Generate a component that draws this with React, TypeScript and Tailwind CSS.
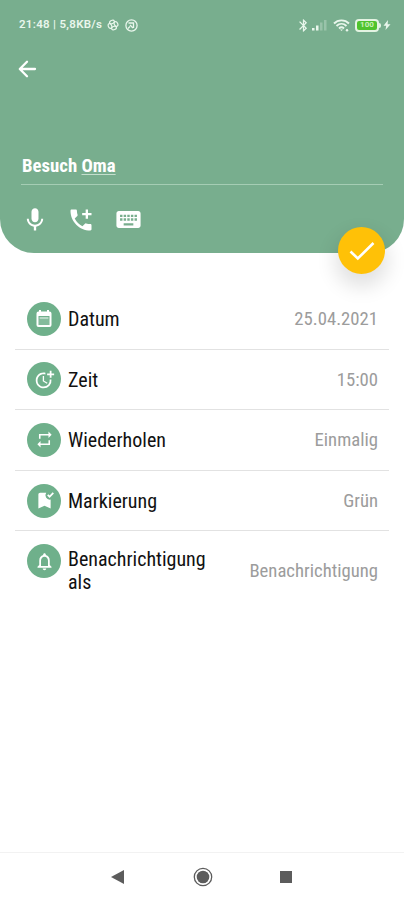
import type { ReactNode } from "react";
import {
  MdAddIcCall,
  MdBluetooth,
  MdBookmarkAdded,
  MdKeyboard,
  MdMic,
  MdMoreTime,
  MdNotificationsNone,
  MdRepeat,
} from "react-icons/md";

function CalendarIcon() {
  return (
    <svg width="16" height="18" viewBox="0 0 16 18" fill="#fff">
      <path fillRule="evenodd" d="M3 0h2v1.500h6V0h2v1.500h.5A2 2 0 0 1 15.500 3.500v11.500a2 2 0 0 1-2 2h-11a2 2 0 0 1-2-2V3.500a2 2 0 0 1 2-2H3zM2.500 6v9h11V6z" />
      <path d="M3.500 7h9v2.200h-9z" opacity=".5" />
      <path d="M2.500 9.500h11v5.500h-11z" opacity=".15" />
    </svg>
  );
}

const rows: { label: string; value: string; icon: ReactNode }[] = [
  { label: "Datum", value: "25.04.2021", icon: <CalendarIcon /> },
  { label: "Zeit", value: "15:00", icon: <MdMoreTime size={21} /> },
  { label: "Wiederholen", value: "Einmalig", icon: <MdRepeat size={19} /> },
  { label: "Markierung", value: "Grün", icon: <MdBookmarkAdded size={21} /> },
];

const iconClass = "flex size-[34px] shrink-0 items-center justify-center rounded-full bg-[#6fb08b] text-white";
const labelClass = "ml-[7px] text-[20px] leading-[23px] text-[#111] [font-stretch:75%]";
const valueClass = "ml-auto text-[18.7px] leading-[24px] text-[#9c9c9c] [font-stretch:75%]";

function StatusBar() {
  return (
    <div className="flex h-[50px] items-center pl-[19px] pr-[13px] text-[#e9f6ec]">
      <span className="w-[85px] whitespace-nowrap text-[11.5px] font-semibold tracking-[0.3px]">21:48 | 5,8KB/s</span>
      {/* fan */}
      <svg className="ml-[3px]" width="12" height="12" viewBox="0 0 12 12" fill="none" stroke="currentColor" strokeWidth="1.200">
        <ellipse cx="5" cy="3" rx="2.500" ry="1.700" transform="rotate(-25 5 3)" />
        <ellipse cx="9" cy="5" rx="1.700" ry="2.500" transform="rotate(-25 9 5)" />
        <ellipse cx="7" cy="9" rx="2.500" ry="1.700" transform="rotate(-25 7 9)" />
        <ellipse cx="3" cy="7" rx="1.700" ry="2.500" transform="rotate(-25 3 7)" />
      </svg>
      <svg className="ml-[6px]" width="13" height="13" viewBox="0 0 13 13" fill="none" stroke="currentColor" strokeWidth="1.300">
        <circle cx="6.500" cy="6.500" r="5.600" />
        <path d="M3.500 4h5v5M3 9.500l2-2M5 6l3 3" />
      </svg>
      <MdBluetooth className="ml-auto" size={15} />
      <svg className="ml-[1px]" width="15" height="12" viewBox="0 0 15 12" fill="currentColor">
        <path d="M0 9h2.500v2.500H0zM4 6.500h2.500v5H4z" />
        <path d="M8 3.500h2.500v8H8zM12 1h2.500v10.500H12z" opacity=".3" />
      </svg>
      <svg className="ml-[6px]" width="17" height="13" viewBox="0 0 17 13" fill="none" stroke="currentColor" strokeWidth="1.900">
        <path d="M1 4.500C5 .300 12 .300 16 4.500M3.500 7c3-2.900 7-2.900 10 0M6 9.500c1.500-1.400 3.500-1.400 5 0" />
        <path d="M7 10.500h3L8.500 12z" fill="currentColor" stroke="none" />
        <circle cx="14" cy="11.200" r="1.200" fill="currentColor" stroke="none" />
      </svg>
      <div className="ml-[5px] flex h-[13px] w-[24px] items-center justify-center rounded-[4px] border-2 border-[#e3f3e2] bg-[#4fc32d] text-[8px] font-bold leading-none text-[#c9f0b8]">
        100
      </div>
      <div className="h-[5px] w-[2px] rounded-r bg-[#e3f3e2]" />
      <svg className="ml-[2px]" width="8" height="10" viewBox="0 0 8 10" fill="currentColor">
        <path d="M5 0L.5 5.800h2.700L2.500 10L7.500 4.200H4.600z" />
      </svg>
    </div>
  );
}

export default function App() {
  return (
    <main className="flex h-[900px] w-[404px] flex-col overflow-hidden bg-white font-[Roboto,sans-serif]">
      <header className="relative h-[253px] rounded-b-[34px] bg-[#78ae8e] text-white">
        <StatusBar />
        <svg className="ml-[18px] mt-[10px]" width="19" height="18" viewBox="0 0 19 18" fill="none" stroke="currentColor" strokeWidth="2.300" strokeLinecap="round" strokeLinejoin="round">
          <path d="M17 9H2M9 1.800L1.800 9L9 16.200" />
        </svg>
        <div className="mx-[21px] mt-[76px] h-[31px] border-b border-[#a5cdb4] pl-px">
          <span className="inline-block text-[18.8px] font-bold leading-[25px] [font-stretch:75%]">
            Besuch <span className="underline decoration-[#c5dfce] decoration-1 underline-offset-2">Oma</span>
          </span>
        </div>
        <div className="flex items-center pl-[21px] pt-[20px]">
          <MdMic size={28} />
          <MdAddIcCall className="ml-[18px]" size={28} />
          <MdKeyboard className="ml-[19px]" size={29} />
        </div>
        <button className="absolute left-[338px] top-[227px] flex size-[47px] items-center justify-center rounded-full bg-[#ffc107] shadow-[0_10px_20px_3px_rgba(0,0,0,0.12)]">
          <svg width="26" height="20" viewBox="0 0 26 20" fill="none" stroke="#fff" strokeWidth="2.600">
            <path d="M1.500 10.500L8.800 17.500L24.500 2" />
          </svg>
        </button>
      </header>

      <ul className="mx-[15px] mt-[36px]">
        {rows.map(row => (
          <li key={row.label} className="flex h-[60.6px] items-center border-b border-[#e2e2e2] pl-[12px] pr-[11px]">
            <div className={iconClass}>{row.icon}</div>
            <span className={`${labelClass} pt-[2px]`}>{row.label}</span>
            <span className={`${valueClass} pt-px`}>{row.value}</span>
          </li>
        ))}
        <li className="flex h-[80px] items-center pl-[12px] pr-[11px]">
          <div className={`${iconClass} mb-[20px]`}>
            <MdNotificationsNone size={21} />
          </div>
          <span className={`${labelClass} w-[150px]`}>Benachrichtigung als</span>
          <span className={valueClass}>Benachrichtigung</span>
        </li>
      </ul>

      <nav className="mt-auto flex h-[48px] items-center border-t border-[#f2f2f2] pl-[111px] text-[#5c5c5c]">
        <svg width="13" height="14" viewBox="0 0 13 14" fill="currentColor">
          <path d="M0 7L13 0v14z" />
        </svg>
        <svg className="ml-[69px]" width="20" height="20" viewBox="0 0 20 20">
          <circle cx="10" cy="10" r="8.700" fill="none" stroke="currentColor" strokeWidth="1.300" />
          <circle cx="10" cy="10" r="6.300" fill="currentColor" />
        </svg>
        <div className="ml-[67px] size-[12px] bg-[#5c5c5c]" />
      </nav>
    </main>
  );
}
